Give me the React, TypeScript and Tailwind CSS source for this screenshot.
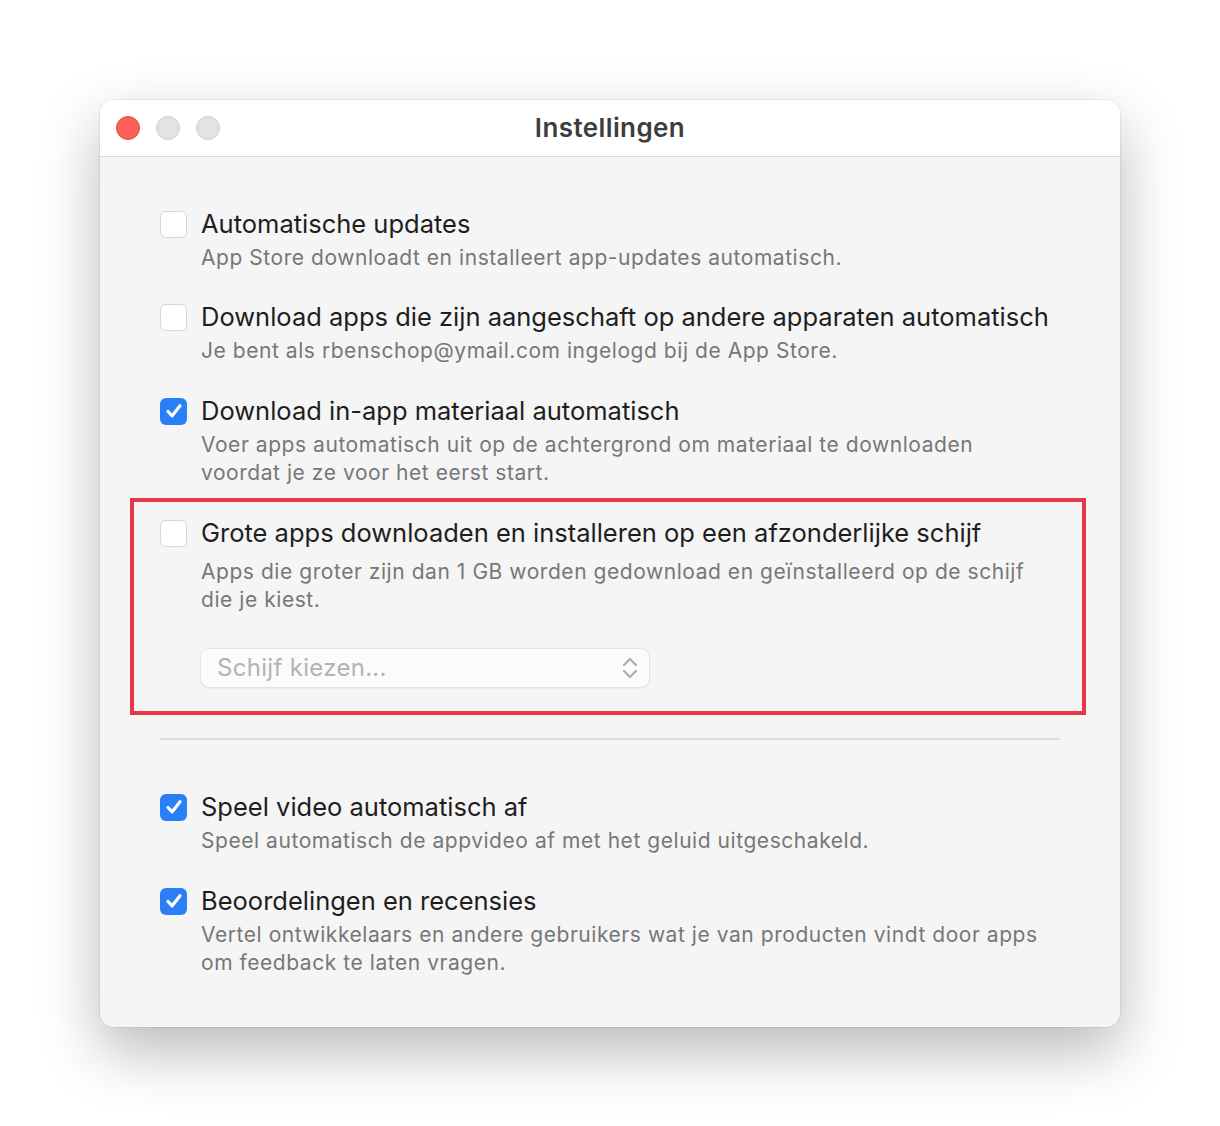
import React from 'react';

const font = { fontFamily: 'Inter, "Noto Sans", sans-serif' };

function Checkbox({ checked }: { checked: boolean }) {
  if (checked) {
    return (
      <div className="w-[27px] h-[27px] rounded-[6px] bg-[#2a7ff6] flex items-center justify-center shrink-0">
        <svg width="20" height="20" viewBox="0 0 20 20" fill="none">
          <path d="M4 10.5 L8.2 14.8 L16 4.8" stroke="white" strokeWidth="3.2" strokeLinecap="round" strokeLinejoin="round" />
        </svg>
      </div>
    );
  }
  return <div className="w-[27px] h-[27px] rounded-[6px] bg-white border border-[#d6d6d6] shrink-0" />;
}

function Title({ children }: { children: React.ReactNode }) {
  return <div className="text-[25.5px] leading-[34px] text-[#1e1e1e] whitespace-nowrap">{children}</div>;
}

function Desc({ children, className = '' }: { children: React.ReactNode; className?: string }) {
  return <div className={`pl-[41px] text-[21px] leading-[28px] text-[#777777] tracking-[0.55px] ${className}`}>{children}</div>;
}

function Option({ checked, title, desc }: { checked: boolean; title: string; desc: React.ReactNode }) {
  return (
    <div>
      <div className="flex items-center gap-[14px]">
        <Checkbox checked={checked} />
        <Title>{title}</Title>
      </div>
      <Desc className="mt-[3px]">{desc}</Desc>
    </div>
  );
}

export default function App() {
  return (
    <div className="min-h-[1126px] bg-white pt-[100px] px-[100px]" style={font}>
      <div className="w-[1020px] rounded-[14px] bg-[#f5f5f5] shadow-[0_24px_60px_rgba(0,0,0,0.28),0_0_0_1px_rgba(0,0,0,0.06)] overflow-hidden">
        <div className="h-[57px] bg-white border-b border-[#d9d9d9] flex items-center px-[16px]">
          <div className="flex gap-[16px]">
            <div className="w-[24px] h-[24px] rounded-full bg-[#fe5f57] border border-[#e5473f]" />
            <div className="w-[24px] h-[24px] rounded-full bg-[#e3e3e3] border border-[#d2d2d2]" />
            <div className="w-[24px] h-[24px] rounded-full bg-[#e3e3e3] border border-[#d2d2d2]" />
          </div>
          <div className="flex-1 text-center text-[26px] font-semibold tracking-[0.4px] text-[#3d3d3d] -ml-[104px] -mt-[2px]">Instellingen</div>
        </div>

        <div className="px-[60px] pt-[50px] pb-[50px]">
          <Option checked={false} title="Automatische updates" desc="App Store downloadt en installeert app-updates automatisch." />
          <div className="mt-[28px]">
            <Option
              checked={false}
              title="Download apps die zijn aangeschaft op andere apparaten automatisch"
              desc="Je bent als rbenschop@ymail.com ingelogd bij de App Store."
            />
          </div>
          <div className="mt-[29px]">
            <Option
              checked={true}
              title="Download in-app materiaal automatisch"
              desc={<>Voer apps automatisch uit op de achtergrond om materiaal te downloaden<br />voordat je ze voor het eerst start.</>}
            />
          </div>

          <div className="mt-[11px] -ml-[30px] -mr-[26px] border-4 border-[#e9374a] pt-[14px] pl-[26px] pr-[22px] pb-[23px]">
            <div className="flex items-center gap-[14px]">
              <Checkbox checked={false} />
              <Title>Grote apps downloaden en installeren op een afzonderlijke schijf</Title>
            </div>
            <Desc className="mt-[8px]">
              Apps die groter zijn dan 1 GB worden gedownload en geïnstalleerd op de schijf<br />die je kiest.
            </Desc>
            <div className="ml-[40px] mt-[34px] w-[450px] h-[40px] rounded-[9px] bg-[#fbfbfb] border border-[#e4e4e4] shadow-[0_1px_1px_rgba(0,0,0,0.05)] flex items-center justify-between pl-[16px] pr-[10px]">
              <span className="text-[24px] text-[#b3b3b3] tracking-[0.3px]">Schijf kiezen...</span>
              <svg width="18" height="26" viewBox="0 0 18 26" fill="none">
                <path d="M3 10 L9 4 L15 10" stroke="#b0b0b0" strokeWidth="2.4" strokeLinecap="round" strokeLinejoin="round" />
                <path d="M3 16 L9 22 L15 16" stroke="#b0b0b0" strokeWidth="2.4" strokeLinecap="round" strokeLinejoin="round" />
              </svg>
            </div>
          </div>

          <div className="mt-[23px] h-[2px] bg-[#dedede]" />

          <div className="mt-[50px]">
            <Option checked={true} title="Speel video automatisch af" desc="Speel automatisch de appvideo af met het geluid uitgeschakeld." />
          </div>
          <div className="mt-[29px]">
            <Option
              checked={true}
              title="Beoordelingen en recensies"
              desc={<>Vertel ontwikkelaars en andere gebruikers wat je van producten vindt door apps<br />om feedback te laten vragen.</>}
            />
          </div>
        </div>
      </div>
    </div>
  );
}
